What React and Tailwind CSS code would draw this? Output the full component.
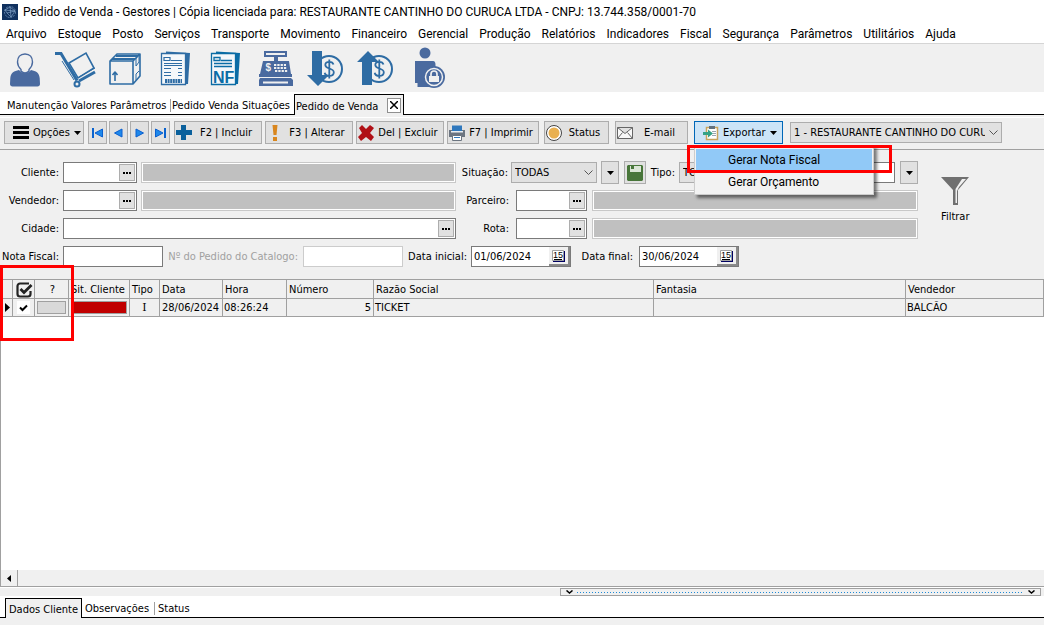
import { useState } from 'react';

const MENUS = [
  'Arquivo', 'Estoque', 'Posto', 'Serviços', 'Transporte', 'Movimento', 'Financeiro', 'Gerencial',
  'Produção', 'Relatórios', 'Indicadores', 'Fiscal', 'Segurança', 'Parâmetros', 'Utilitários', 'Ajuda',
];

const coin = (
  <>
    <circle cx="29" cy="25" r="13" fill="none" stroke="#2e6ca4" strokeWidth="2" />
    <path
      d="M33.500 20.500c-.5-1.800-2-2.700-4.200-2.700-2.500 0-4 1.300-4 3.200 0 4.300 8.500 2.700 8.500 7.200 0 2.200-1.800 3.700-4.500 3.700-2.500 0-4.200-1.200-4.600-3.200M29.300 15.500v19"
      fill="none"
      stroke="#2e6ca4"
      strokeWidth="1.800"
    />
  </>
);

const SHORTCUTS = [
  {
    label: 'Clientes',
    icon: (
      <g>
        <path d="M19 26c-5 1-8 2.500-8.700 8l-.3 6c0 1.500 1 2.500 2.500 2.500h25c1.500 0 2.500-1 2.500-2.500l-.3-6c-.7-5.500-3.700-7-8.700-8-3 4-9 4-12 0z" fill="#4a6a9f" />
        <path d="M25 10c-5 0-7.500 3.500-7.500 8 0 3.500 1.500 5.500 3.500 7.500V27c2.500 2.500 5.500 2.500 8 0v-1.500c2-2 3.500-4 3.500-7.500 0-4.500-2.500-8-7.500-8z" fill="#f0f0f0" stroke="#4a6a9f" strokeWidth="1.400" />
      </g>
    ),
  },
  {
    label: 'Estoque',
    icon: (
      <g fill="none" stroke="#2e6ca4">
        <path d="M5 9.500h6l16 27" strokeWidth="3" />
        <path d="M29 37l16-9" strokeWidth="3" />
        <path d="M29 33l16-9M12 17l12 19" strokeWidth="1" />
        <path d="M19 19l17-10 8 15-16 10z" strokeWidth="1.600" />
        <circle cx="27" cy="40" r="2.500" fill="#f0f0f0" strokeWidth="2" />
      </g>
    ),
  },
  {
    label: 'Produtos',
    icon: (
      <g fill="none" stroke="#2e6ca4" strokeWidth="1.600" strokeLinejoin="round">
        <path d="M10 17h23v23H10zM10 17l7-7h23l-7 7M40 10v22l-7 8" />
        <path d="M12 15h23M16 12h22" strokeWidth="2" />
        <path d="M36 14v8l3-4v-6M36 36v-6l3-3" strokeWidth="1" />
        <path d="M15 37v-8M12.500 31l2.500-3 2.500 3" strokeWidth="1.600" />
      </g>
    ),
  },
  {
    label: 'Pedidos',
    icon: (
      <g>
        <path d="M16 7.500l24 1.500-2 31H16z" fill="#2e6ca4" />
        <path d="M11.500 9.500h24v31h-24z" fill="#f4f7fa" stroke="#2e6ca4" strokeWidth="1.300" />
        <path d="M14 13.500h6v3h-6zM21 16.500h11M14 19.500h18M14 24.500h7M28 24.500h4M14 28.500h7M28 28.500h4M14 31.500h7M28 31.500h4M14 21.500h18" fill="none" stroke="#2e6ca4" strokeWidth="1.200" />
        <path d="M15 37h17" stroke="#2e6ca4" strokeWidth="4" strokeDasharray="2 .6" />
      </g>
    ),
  },
  {
    label: 'Nota fiscal',
    icon: (
      <g>
        <path d="M16 7.500l24 1.500-2 31H16z" fill="#0b6ca5" />
        <path d="M11.500 9.500h24v31h-24z" fill="#f4f7fa" stroke="#0b6ca5" strokeWidth="1.300" />
        <path d="M14 13.500h6v3h-6zM21 16.500h11M14 19.500h18M14 22.500h18" fill="none" stroke="#0b6ca5" strokeWidth="1.300" />
        <text x="13" y="39" fontSize="16" fontWeight="bold" fontFamily="Liberation Sans, sans-serif" fill="#0b6ca5">NF</text>
      </g>
    ),
  },
  {
    label: 'Caixa',
    icon: (
      <g fill="#4a6a9f">
        <path d="M14 7h23v6h-9v4h11l2 13h1v3H9v-3h1l3-13h11v-4H14zm2 2v2h19V9z" fillRule="evenodd" />
        <path d="M10 34h31l2 2v6H9v-6z" />
        <path d="M13 37.500h25v2H13z" fill="#f0f0f0" />
        <path d="M24 21h12M24 24h13M25 27h13" stroke="#f0f0f0" strokeWidth="2" strokeDasharray="2.300 1" />
        <text x="15.500" y="27" fontSize="10" fontWeight="bold" fontFamily="Liberation Sans, sans-serif" fill="#f0f0f0">$</text>
      </g>
    ),
  },
  {
    label: 'Contas a pagar',
    icon: (
      <g>
        {coin}
        <path d="M12 7h10v24h7L18 42 7 31h5z" fill="#2e6ca4" />
      </g>
    ),
  },
  {
    label: 'Contas a receber',
    icon: (
      <g>
        {coin}
        <path d="M12 41h10V18h7L18 7 7 18h5z" fill="#2e6ca4" />
      </g>
    ),
  },
  {
    label: 'Acesso',
    icon: (
      <g>
        <circle cx="25" cy="9" r="5.500" fill="#4a6a9f" />
        <path d="M15 17h18c2 0 2.500 2 2.500 4v22h-18v-4H15z" fill="#4a6a9f" />
        <circle cx="34" cy="33" r="11" fill="#4a6a9f" />
        <circle cx="34" cy="33" r="8.500" fill="#4a6a9f" stroke="#f0f0f0" strokeWidth="1.500" />
        <path d="M29 32h10v6H29z" fill="#f0f0f0" />
        <path d="M31 32v-2a3 3 0 0 1 6 0v2" fill="none" stroke="#f0f0f0" strokeWidth="1.700" />
      </g>
    ),
  },
];

const BTN = 'flex h-[23px] shrink-0 items-center border border-[#adadad] bg-[#e1e1e1]';

function Caret() {
  return (
    <svg width="7" height="4" viewBox="0 0 7 4" className="shrink-0">
      <path d="M0 0h7L3.500 4z" fill="#000" />
    </svg>
  );
}

function Nav({ label, d, first, last }) {
  return (
    <button aria-label={label} className={`${BTN} w-[19px] justify-center`}>
      <svg width="13" height="10" viewBox="0 0 13 10">
        {first && <path d="M1 0h2v10H1z" fill="#0a63cf" />}
        {last && <path d="M10 0h2v10h-2z" fill="#0a63cf" />}
        <path d={d} fill="#1e88ea" stroke="#0a5fd0" />
      </svg>
    </button>
  );
}

function Tool({ icon, children, className }) {
  return (
    <button className={`${BTN} ${className}`}>
      <svg width="18" height="18" viewBox="0 0 18 18" className="shrink-0">{icon}</svg>
      <span className="flex-1 whitespace-nowrap pr-0.5 text-center">{children}</span>
    </button>
  );
}

function Chevron() {
  return (
    <svg width="9" height="6" viewBox="0 0 9 6" className="pointer-events-none absolute right-1 top-2">
      <path d="M.5.500l4 4 4-4" fill="none" stroke="#555" />
    </svg>
  );
}

function Select({ id, label, value, className }) {
  return (
    <div className={`relative ${className}`}>
      <select id={id} aria-label={label} defaultValue={value} className="h-full w-full appearance-none overflow-hidden text-clip whitespace-nowrap border border-[#adadad] bg-[#e1e1e1] pl-[3px] pr-4 outline-none">
        <option>{value}</option>
      </select>
      <Chevron />
    </div>
  );
}

function Lookup({ id, className }) {
  return (
    <div className={`flex h-[21px] border border-[#7a7a7a] bg-white p-px ${className}`}>
      <input id={id} className="min-w-0 flex-1 bg-white px-0.5 outline-none" />
      <button aria-label="Pesquisar" className="flex w-4 items-center justify-center border border-[#adadad] bg-[#e1e1e1]">
        <svg width="8" height="2" viewBox="0 0 8 2"><path d="M0 0h2v2H0zM3 0h2v2H3zM6 0h2v2H6z" /></svg>
      </button>
    </div>
  );
}

function Readout({ label }) {
  return <input readOnly aria-label={label} className="h-[21px] min-w-0 flex-1 border border-[#c8c8c8] bg-[#c0c0c0] outline-none ring-1 ring-inset ring-white" />;
}

function DateField({ id, value }) {
  return (
    <div className="flex h-[21px] w-[100px] border border-[#7a7a7a] bg-white">
      <input id={id} defaultValue={value} className="min-w-0 flex-1 bg-white pl-0.5 outline-none" />
      <button aria-label="Abrir calendário" className="flex w-[21px] items-center justify-center border-b-2 border-r-2 border-[#8a8a8a] bg-[#f0f0f0]">
        <svg width="13" height="12" viewBox="0 0 13 12">
          <path d="M1 1h12v11H1z" fill="#000060" />
          <path d="M.5.500h11v10H.5z" fill="#fff" stroke="#a0a0a0" />
          <path d="M2 9.500h8" stroke="#000" />
          <text x="1" y="8" fontSize="9" fontFamily="Liberation Sans, sans-serif">15</text>
        </svg>
      </button>
    </div>
  );
}

const LABEL = 'shrink-0 whitespace-nowrap text-right';

const COLUMNS = [
  { title: 'Sit. Cliente', width: 'w-[61px]' },
  { title: 'Tipo', width: 'w-[30px]' },
  { title: 'Data', width: 'w-[63px]' },
  { title: 'Hora', width: 'w-[64px]' },
  { title: 'Número', width: 'w-[87px]' },
  { title: 'Razão Social', width: 'w-[280px]' },
  { title: 'Fantasia', width: 'w-[252px]' },
  { title: 'Vendedor', width: 'w-auto' },
];

export default function App() {
  const [menuOpen, setMenuOpen] = useState(true);
  const [checked, setChecked] = useState(true);

  return (
    <div className="flex min-h-screen flex-col overflow-hidden bg-[#f0f0f0] font-['DejaVu_Sans_Condensed','Noto_Sans',sans-serif] text-[11px] leading-[14px] text-black">
      <header className="bg-white font-['Roboto','Noto_Sans',sans-serif] text-[12px]">
        <div className="flex h-6 items-center gap-[5px] pl-0.5">
          <svg width="16" height="16" viewBox="0 0 16 16">
            <path d="M0 0h16v16H0z" fill="#10315f" />
            <g fill="none" stroke="#7fa0c5" strokeWidth=".7">
              <circle cx="8" cy="8" r="5.500" strokeDasharray="2 1" />
              <path d="M3 6l5-3 5 4-4 6-4-4zM8 3l1 10M3 6l10 1M5 9l8-2" />
            </g>
          </svg>
          <h1 className="whitespace-nowrap">Pedido de Venda - Gestores | Cópia licenciada para: RESTAURANTE CANTINHO DO CURUCA LTDA - CNPJ: 13.744.358/0001-70</h1>
        </div>
        <nav className="flex h-5 items-center gap-[11px] border-b border-[#d5d5d5] pl-1.5">
          {MENUS.map((m) => <button key={m}>{m}</button>)}
        </nav>
      </header>

      <div className="flex h-12">
        {SHORTCUTS.map((s) => (
          <button key={s.label} aria-label={s.label}>
            <svg width="50" height="48" viewBox="0 0 50 48">{s.icon}</svg>
          </button>
        ))}
      </div>

      <div role="tablist" className="flex h-[23px] items-end bg-white">
        <button role="tab" className="h-[23px] w-[170px] whitespace-nowrap border-b border-black pl-[7px] pt-1.5 text-left">Manutenção Valores Parâmetros</button>
        <button role="tab" className="h-[23px] w-[124px] whitespace-nowrap border-b border-black pt-1.5 text-left">
          <span className="border-l border-[#a0a0a0] pl-px">Pedido Venda Situações</span>
        </button>
        <div className="flex h-[21px] w-[110px] items-center justify-between border border-b-0 border-black bg-[#f0f0f0] pl-px pr-0.5">
          <button role="tab" aria-selected="true" className="whitespace-nowrap pt-1">Pedido de Venda</button>
          <button aria-label="Fechar" className="flex h-[15px] w-[14px] items-center justify-center border border-[#909090] bg-white">
            <svg width="8" height="8" viewBox="0 0 8 8"><path d="M0 0l8 8M8 0L0 8" stroke="#000" strokeWidth="1.500" /></svg>
          </button>
        </div>
        <div className="h-[23px] flex-1 border-b border-black" />
      </div>

      <div className="mt-0.5 flex h-[33px] items-center border-b border-[#a0a0a0] border-t border-t-white pb-0.5 pl-1">
        <button className={`${BTN} w-20 gap-1 pl-2`}>
          <svg width="16" height="13" viewBox="0 0 16 13" className="shrink-0"><path d="M0 0h16v3H0zM0 5h16v3H0zM0 10h16v3H0z" /></svg>
          Opções
          <Caret />
        </button>
        <div className="ml-1 flex gap-0.5">
          <Nav label="Primeiro" first d="M11.500 1v8L4 5z" />
          <Nav label="Anterior" d="M10 1v8L2.500 5z" />
          <Nav label="Próximo" d="M3 1v8l7.500-4z" />
          <Nav label="Último" last d="M1.500 1v8L9 5z" />
        </div>
        <Tool className="ml-1 w-[88px]" icon={<path d="M6 1h5v5h6v5h-6v5H6v-5H1V6h5z" fill="#0a609c" />}>F2 | Incluir</Tool>
        <Tool className="ml-[3px] w-[88px]" icon={<path d="M6.500 1h5l-1 10h-3zM7 13h4v4H7z" fill="#d9861e" />}>F3 | Alterar</Tool>
        <Tool className="ml-[3px] w-[88px]" icon={<path d="M2 4l3-3 4 4 4-4 4 3-4 5 4 4-3 4-5-4-5 4-3-4 4-4z" fill="#b01016" />}>Del | Excluir</Tool>
        <Tool
          className="ml-[3px] w-[92px]"
          icon={
            <g>
              <path d="M1 6h16v7H1z" fill="#6b7480" />
              <path d="M4 1.500h10V7H4z" fill="#2f78bd" />
              <path d="M3 7h12v1.500H3z" fill="#e8edf2" />
              <path d="M4.500 11.500h9v5h-9z" fill="#fff" stroke="#6b7480" />
              <path d="M6 13.500h6" stroke="#2f78bd" />
            </g>
          }
        >
          F7 | Imprimir
        </Tool>
        <Tool className="ml-[5px] w-[65px]" icon={<g><circle cx="9" cy="9" r="7.500" fill="#fff" stroke="#444" /><circle cx="9" cy="9" r="5.500" fill="#e9b050" /></g>}>Status</Tool>
        <Tool className="ml-1.5 w-[73px]" icon={<path d="M1.500 3.500h15v11h-15zl7.500 6 7.500-6M1.500 14.500l5-6M16.500 14.500l-5-6" fill="#f8f8f8" stroke="#666" />}>E-mail</Tool>

        <div className="relative ml-1.5 shrink-0">
          <button
            aria-expanded={menuOpen}
            onClick={() => setMenuOpen(!menuOpen)}
            className="flex h-[23px] w-[89px] items-center gap-1 border border-[#0067b8] bg-[#cce4f7] pl-2"
          >
            <svg width="16" height="16" viewBox="0 0 16 16" className="shrink-0">
              <path d="M3.500 2.500h11v12h-11z" fill="#fff" stroke="#c9a45c" strokeWidth="1.500" />
              <path d="M6 1h6v3H6z" fill="#62717f" />
              <path d="M9 6.500h4M10 8.500h3M9 10.500h4" stroke="#9aa5ae" />
              <path d="M0 7h5V4.500L10 8.500l-5 4V10H0z" fill="#35a285" />
            </svg>
            Exportar
            <Caret />
          </button>
          {menuOpen && (
            <div role="menu" className="absolute left-0 top-6 z-10 w-[180px] border border-[#ccc] bg-[#f2f2f2] p-px pt-[3px] font-['Roboto','Noto_Sans',sans-serif] text-[12px] shadow-[3px_3px_3px_rgba(0,0,0,0.5)]">
              <button role="menuitem" className="block h-[22px] w-full bg-[#91c9f7] pl-8 text-left">Gerar Nota Fiscal</button>
              <button role="menuitem" className="block h-[22px] w-full pl-8 text-left">Gerar Orçamento</button>
              <div className="pointer-events-none absolute -left-2 -top-px h-7 w-[205px] border-[3px] border-[#ff0000]" />
            </div>
          )}
        </div>
        <Select label="Empresa" value="1 - RESTAURANTE CANTINHO DO CURUCA" className="ml-[7px] h-[21px] w-[212px]" />
      </div>

      <form className="flex flex-col gap-[7px] pb-3 pt-3" onSubmit={(e) => e.preventDefault()}>
        <div className="flex">
          <div className="flex w-[456px] shrink-0 flex-col gap-[7px]">
            <div className="flex items-center gap-1">
              <label htmlFor="cliente" className={`${LABEL} w-[59px]`}>Cliente:</label>
              <Lookup id="cliente" className="w-[74px]" />
              <Readout label="Nome do cliente" />
            </div>
            <div className="flex items-center gap-1">
              <label htmlFor="vendedor" className={`${LABEL} w-[59px]`}>Vendedor:</label>
              <Lookup id="vendedor" className="w-[74px]" />
              <Readout label="Nome do vendedor" />
            </div>
            <div className="flex items-center gap-1">
              <label htmlFor="cidade" className={`${LABEL} w-[59px]`}>Cidade:</label>
              <Lookup id="cidade" className="flex-1" />
            </div>
          </div>

          <div className="flex min-w-0 flex-1 flex-col gap-[7px]">
            <div className="flex h-[21px] items-center">
              <label htmlFor="situacao" className={`${LABEL} w-[52px]`}>Situação:</label>
              <Select id="situacao" value="TODAS" className="ml-[3px] h-[21px] w-[86px] shrink-0" />
              <button aria-label="Opções de situação" className={`${BTN} ml-1 w-[18px] justify-center`}><Caret /></button>
              <button aria-label="Salvar" className={`${BTN} ml-[5px] w-[22px] justify-center`}>
                <svg width="16" height="16" viewBox="0 0 16 16">
                  <path d="M1 0h14l1 1v14l-1 1H1l-1-1V1z" fill="#48763a" />
                  <path d="M3 1h11v6H3z" fill="#dbe6d6" />
                  <path d="M4 1h3v3H4z" fill="#48763a" />
                </svg>
              </button>
              <label htmlFor="tipo" className={`${LABEL} ml-1 w-[25px]`}>Tipo:</label>
              <Select id="tipo" value="TODOS" className="ml-1 h-[21px] w-[86px] shrink-0" />
              <input aria-label="Filtro de tipo" className="ml-1 h-[21px] min-w-0 flex-1 border border-[#7a7a7a] bg-white outline-none" />
              <button aria-label="Opções de tipo" className={`${BTN} ml-[5px] w-[18px] justify-center`}><Caret /></button>
            </div>
            <div className="flex items-center">
              <label htmlFor="parceiro" className={`${LABEL} w-[53px]`}>Parceiro:</label>
              <Lookup id="parceiro" className="ml-[7px] mr-[5px] w-[71px]" />
              <Readout label="Nome do parceiro" />
            </div>
            <div className="flex items-center">
              <label htmlFor="rota" className={`${LABEL} w-[53px]`}>Rota:</label>
              <Lookup id="rota" className="ml-[7px] mr-[5px] w-[71px]" />
              <Readout label="Nome da rota" />
            </div>
          </div>

          <div className="w-[126px] shrink-0 pl-[23px] pt-3.5">
            <button className="flex flex-col items-center gap-1">
              <svg width="28" height="30" viewBox="0 0 28 30">
                <path d="M0 1h28L17 14v15h-5V14z" fill="#707070" />
                <path d="M21 3h4l-7 8-2 4v12h-1.500V13z" fill="#f0f0f0" />
              </svg>
              Filtrar
            </button>
          </div>
        </div>

        <div className="flex items-center">
          <label htmlFor="nota" className={`${LABEL} w-[59px]`}>Nota Fiscal:</label>
          <input id="nota" className="ml-1 h-[21px] w-[100px] border border-[#7a7a7a] bg-white px-1 outline-none" />
          <label htmlFor="catalogo" className={`${LABEL} w-[135px] text-[#a0a0a0]`}>Nº do Pedido do Catalogo:</label>
          <input id="catalogo" disabled className="ml-[5px] h-[21px] w-[100px] border border-[#ccc] bg-white" />
          <label htmlFor="inicial" className={`${LABEL} mr-1 w-[64px]`}>Data inicial:</label>
          <DateField id="inicial" value="01/06/2024" />
          <label htmlFor="final" className={`${LABEL} mr-1.5 w-[62px]`}>Data final:</label>
          <DateField id="final" value="30/06/2024" />
        </div>
      </form>

      <main className="relative flex flex-1 flex-col border-b border-l border-t border-[#a0a0a0] bg-white">
        <table className="w-full table-fixed border-separate border-spacing-0">
          <thead>
            <tr className="h-[19px] bg-[#f0f0f0] text-left [&>th]:overflow-hidden [&>th]:border-b [&>th]:border-r [&>th]:border-[#a0a0a0] [&>th]:p-0 [&>th]:pl-0.5 [&>th]:pt-0.5 [&>th]:font-normal [&>th]:whitespace-nowrap">
              <th className="w-3" />
              <th className="w-[22px]">
                <svg width="17" height="16" viewBox="0 0 17 16" className="mx-auto">
                  <path d="M13 1.500H4A2.500 2.500 0 0 0 1.500 4v8A2.500 2.500 0 0 0 4 14.500h8a2.500 2.500 0 0 0 2.500-2.500V9" fill="none" stroke="#222" strokeWidth="2.200" />
                  <path d="M4.500 7l3.500 3.500L15.500 3" fill="none" stroke="#222" strokeWidth="2.800" />
                </svg>
              </th>
              <th className="w-[34px] text-center">?</th>
              {COLUMNS.map((c) => <th key={c.title} className={c.width}>{c.title}</th>)}
            </tr>
          </thead>
          <tbody>
            <tr className="h-[18px] bg-[#f0f0f0] [&>td]:overflow-hidden [&>td]:border-b [&>td]:border-r [&>td]:border-[#a0a0a0] [&>td]:p-0 [&>td]:whitespace-nowrap">
              <td>
                <svg width="5" height="9" viewBox="0 0 5 9" className="ml-1"><path d="M0 0l5 4.500L0 9z" /></svg>
              </td>
              <td>
                <label className="relative mx-auto flex h-[13px] w-[13px] items-center justify-center bg-white">
                  <input
                    type="checkbox"
                    aria-label="Selecionar pedido 5"
                    checked={checked}
                    onChange={(e) => setChecked(e.target.checked)}
                    className="absolute inset-0 appearance-none"
                  />
                  {checked && <svg width="9" height="8" viewBox="0 0 9 8" className="pointer-events-none relative"><path d="M1 3.500L3.500 6 8 1.500" fill="none" stroke="#000" strokeWidth="2" /></svg>}
                </label>
              </td>
              <td><div className="mx-auto h-[13px] w-[29px] border border-[#a0a0a0] bg-[#d9d9d9]" /></td>
              <td><div className="mx-0.5 h-[13px] border border-[#a0a0a0] bg-[#c00000]" /></td>
              <td className="text-center font-['DejaVu_Serif','Liberation_Serif',serif]">I</td>
              <td><span className="pl-0.5">28/06/2024</span></td>
              <td><span className="pl-px">08:26:24</span></td>
              <td className="text-right"><span className="pr-0.5">5</span></td>
              <td><span className="pl-px">TICKET</span></td>
              <td />
              <td><span className="pl-px">BALCÃO</span></td>
            </tr>
          </tbody>
        </table>
        <div className="pointer-events-none absolute -left-px -top-[15px] h-[76px] w-[74px] border-[3px] border-[#ff0000]" />
        <div className="mt-auto flex h-4 bg-[#f0f0f0]">
          <button aria-label="Rolar para a esquerda" className="flex w-[17px] items-center justify-center border-r border-[#a0a0a0]">
            <svg width="4" height="7" viewBox="0 0 4 7"><path d="M4 0v7L0 3.500z" /></svg>
          </button>
        </div>
      </main>

      <div className="flex h-[9px] justify-end border-t border-white pr-[3px]">
        <div className="flex h-2 w-[481px] items-center gap-1 border border-[#a0a0a0] px-[5px]">
          <svg width="7" height="4" viewBox="0 0 7 4"><path d="M.5.500l3 2.500 3-2.500" fill="none" stroke="#000" strokeWidth="1.500" /></svg>
          <svg height="1" className="min-w-0 flex-1"><line x1="0" x2="100%" y1=".5" y2=".5" stroke="#1e8ad6" strokeDasharray="1 2" /></svg>
          <svg width="7" height="4" viewBox="0 0 7 4"><path d="M.5.500l3 2.500 3-2.500" fill="none" stroke="#000" strokeWidth="1.500" /></svg>
        </div>
      </div>

      <div role="tablist" className="flex h-[22px] items-end bg-white">
        <div className="h-full w-[5px] border-b border-black" />
        <button role="tab" aria-selected="true" className="h-5 w-[77px] whitespace-nowrap border border-b-0 border-black bg-[#f0f0f0] pt-0.5">Dados Cliente</button>
        <button role="tab" className="h-full w-[72px] whitespace-nowrap border-b border-black pl-[3px] pt-1 text-left">Observações</button>
        <button role="tab" className="h-full flex-1 border-b border-black pt-1 text-left">
          <span className="border-l border-[#a0a0a0] pl-[3px]">Status</span>
        </button>
      </div>
      <div className="h-[7px]" />
    </div>
  );
}
